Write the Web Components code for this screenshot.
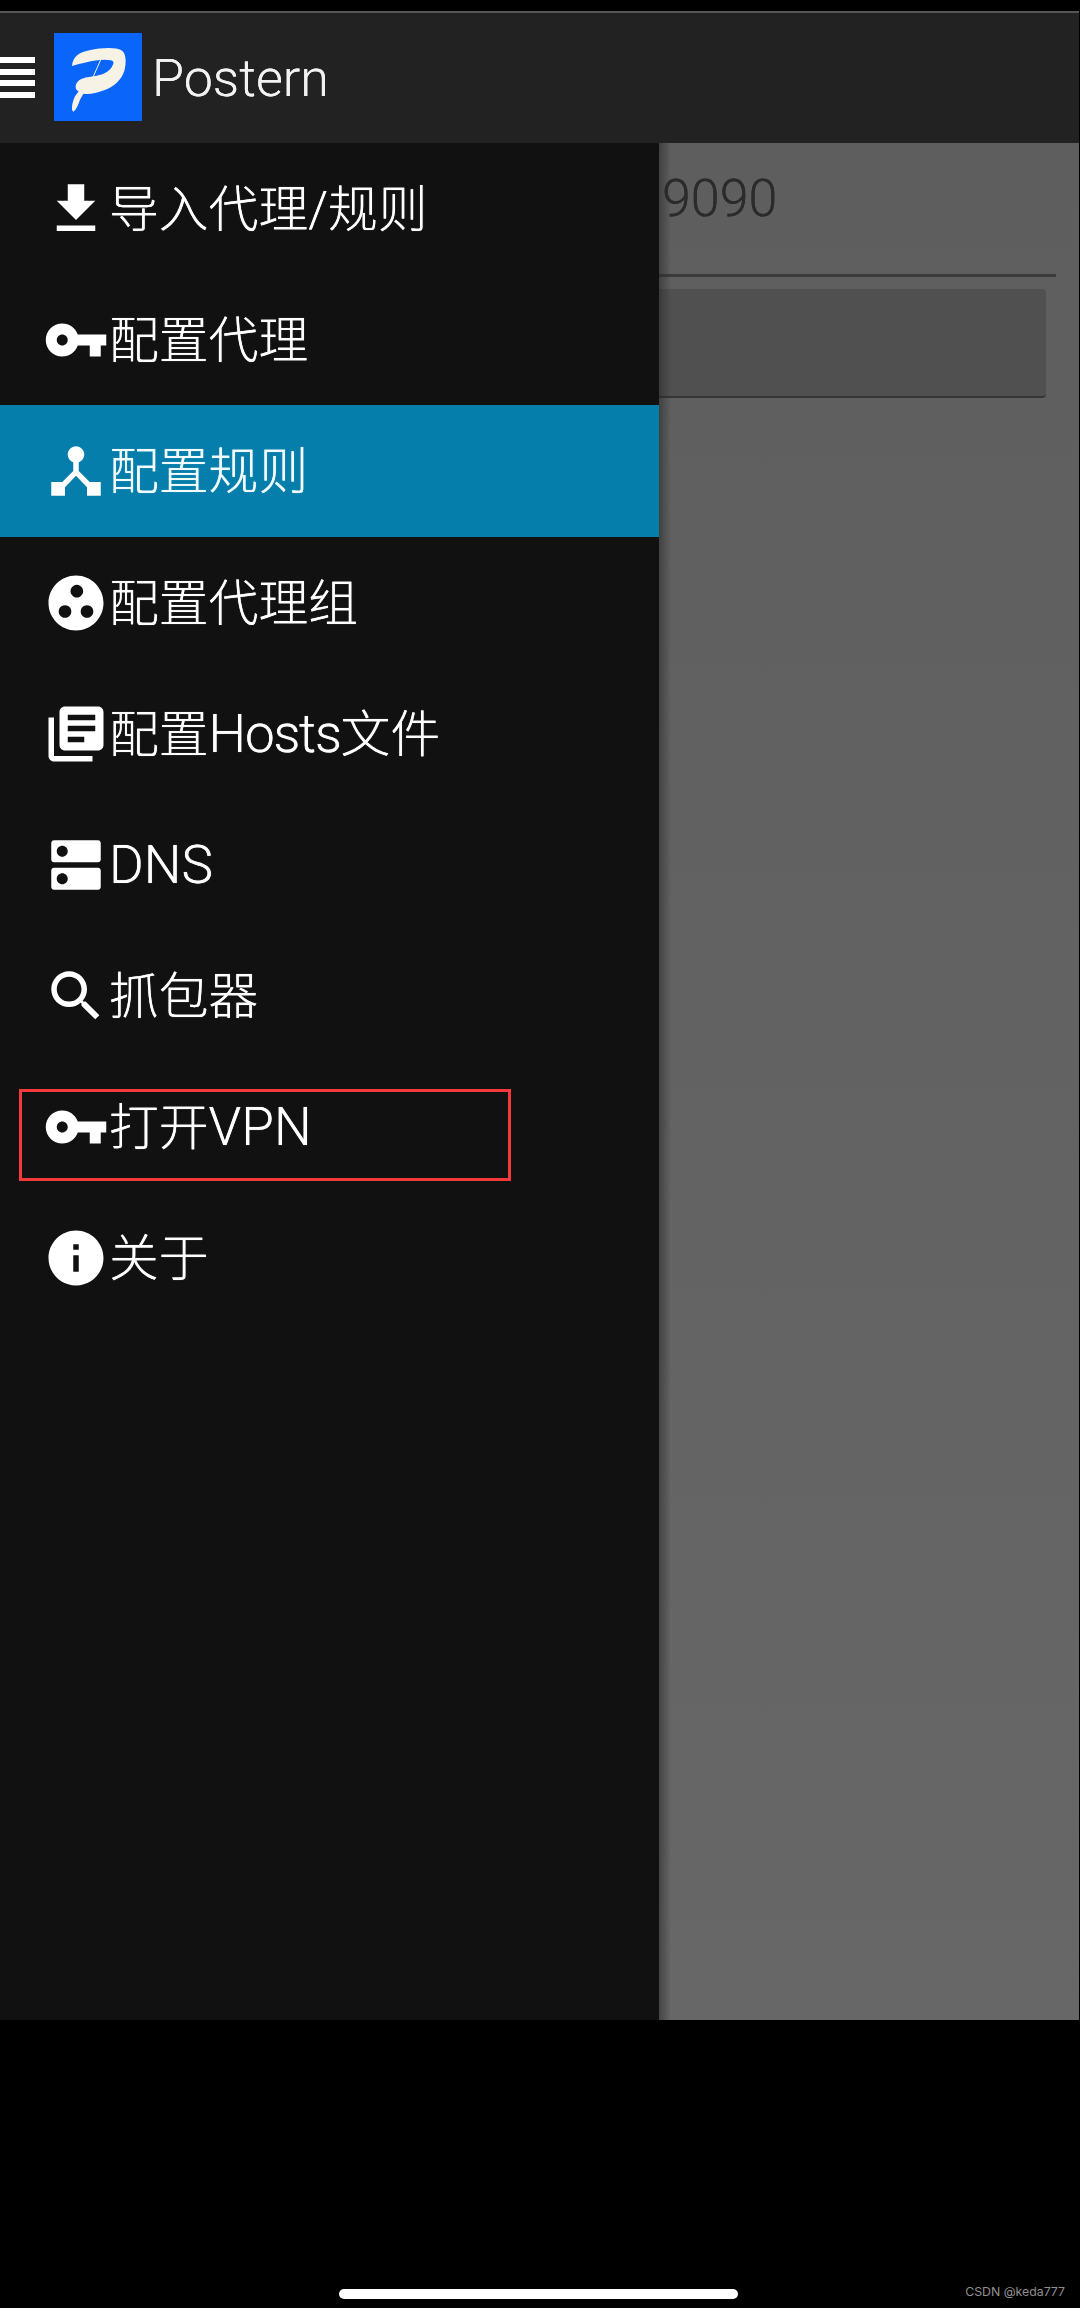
<!DOCTYPE html>
<html lang="zh-CN">
<head>
<meta charset="utf-8">
<title>Postern</title>
<style>
html,body{margin:0;padding:0;background:#000;}
body{width:1080px;height:2308px;overflow:hidden;font-family:Roboto,"Noto Sans CJK SC",sans-serif;}
</style>
</head>
<body>
<postern-app>
  <postern-toolbar slot="toolbar">Postern</postern-toolbar>
  <postern-drawer slot="drawer">
    <postern-row icon="download">导入代理/规则</postern-row>
    <postern-row icon="key">配置代理</postern-row>
    <postern-row icon="hub" active>配置规则</postern-row>
    <postern-row icon="group">配置代理组</postern-row>
    <postern-row icon="library">配置<b class="tight">Hosts</b>文件</postern-row>
    <postern-row icon="dns"><b>DNS</b></postern-row>
    <postern-row icon="search">抓包器</postern-row>
    <postern-row icon="key" marked>打开<b>VPN</b></postern-row>
    <postern-row icon="info">关于</postern-row>
  </postern-drawer>
  <postern-content slot="content">9090</postern-content>
  <postern-navbar slot="navbar">CSDN @keda777</postern-navbar>
</postern-app>
<script>
const ICONS={
 download:'M19 9h-4V3H9v6H5l7 7 7-7zM5 18v2h14v-2H5z',
 key:'M12.65 10C11.83 7.67 9.61 6 7 6c-3.31 0-6 2.69-6 6s2.69 6 6 6c2.61 0 4.83-1.67 5.65-4H17v4h4v-4h2v-4H12.65zM7 14c-1.1 0-2-.9-2-2s.9-2 2-2 2 .9 2 2-.9 2-2 2z',
 hub:'M17 16l-4-4V8.82C14.16 8.4 15 7.3 15 6c0-1.66-1.34-3-3-3S9 4.34 9 6c0 1.3.84 2.4 2 2.82V12l-4 4H3v5h5v-3.05l4-4.2 4 4.2V21h5v-5h-4z',
 group:'M12 2C6.48 2 2 6.48 2 12s4.48 10 10 10 10-4.48 10-10S17.52 2 12 2zM12.3 5.4a2.3 2.3 0 1 0 .001 0zM8 12.8a2.3 2.3 0 1 0 .001 0zM16 12.8a2.3 2.3 0 1 0 .001 0z',
 library:'M4 6H2v14c0 1.1.9 2 2 2h14v-2H4V6zm16-4H8c-1.1 0-2 .9-2 2v12c0 1.1.9 2 2 2h12c1.1 0 2-.9 2-2V4c0-1.1-.9-2-2-2zm-1 9H9V9h10v2zm-4 4H9v-2h6v2zm4-8H9V5h10v2z',
 dns:'M20 13H4c-.55 0-1 .45-1 1v6c0 .55.45 1 1 1h16c.55 0 1-.45 1-1v-6c0-.55-.45-1-1-1zM7 19c-1.1 0-2-.9-2-2s.9-2 2-2 2 .9 2 2-.9 2-2 2zM20 3H4c-.55 0-1 .45-1 1v6c0 .55.45 1 1 1h16c.55 0 1-.45 1-1V4c0-.55-.45-1-1-1zM7 9c-1.1 0-2-.9-2-2s.9-2 2-2 2 .9 2 2-.9 2-2 2z',
 search:'M15.5 14h-.79l-.28-.27C15.41 12.59 16 11.11 16 9.5 16 5.91 13.09 3 9.5 3S3 5.91 3 9.5 5.91 16 9.5 16c1.61 0 3.09-.59 4.23-1.57l.27.28v.79l5 4.99L20.49 19l-4.99-5zm-6 0C7.01 14 5 11.99 5 9.5S7.01 5 9.5 5 14 7.01 14 9.5 11.99 14 9.5 14z',
 info:'M12 2C6.48 2 2 6.48 2 12s4.48 10 10 10 10-4.48 10-10S17.52 2 12 2zm1 15h-2v-6h2v6zm0-8h-2V7h2v2z'
};
class Base extends HTMLElement{
  constructor(){super();this.attachShadow({mode:'open'}).innerHTML=this.markup();}
}
customElements.define('postern-app',class extends Base{markup(){return `
<style>
:host{display:grid;grid-template-columns:659px 420px 1px;grid-template-rows:11px 132px 1877px 288px;width:1080px;height:2308px;background:#000;}
.tb{grid-column:1 / 3;grid-row:2;display:block}
.dr{grid-column:1;grid-row:3;display:block}
.ct{grid-column:2;grid-row:3;display:block}
.nv{grid-column:1 / 4;grid-row:4;display:block}
</style>
<div class="tb"><slot name="toolbar"></slot></div>
<div class="dr"><slot name="drawer"></slot></div>
<div class="ct"><slot name="content"></slot></div>
<div class="nv"><slot name="navbar"></slot></div>`}});
customElements.define('postern-toolbar',class extends Base{markup(){return `
<style>
:host{display:flex;align-items:flex-start;box-sizing:border-box;height:132px;border-top:2px solid #565656;background:#222;color:#f2f2f2;}
.menu{display:flex;flex-direction:column;gap:5.5px;width:35px;margin-top:44px;flex:none}
.menu i{display:block;height:6px;background:#fff}
svg{display:block;width:88px;height:88px;margin:20px 0 0 19px;flex:none}
.title{margin:37px 0 0 10px;font:300 52px/58px Roboto,sans-serif;text-shadow:0 0 .6px #f2f2f2}
</style>
<div class="menu"><i></i><i></i><i></i><i></i></div>
<svg viewBox="72 38 264 264" aria-hidden="true"><rect x="72" y="38" width="264" height="264" fill="#0a66fb"/>
<path fill="#f6f3e6" d="M126 137C128 110 146 96 178 90C215 82 258 80 274 90C290 100 289 130 283 152C274 180 250 200 222 210C200 218 175 224 160 220L150 238C145 252 138 270 130 274C122 270 127 245 135 228L146 213C135 208 134 194 143 184C152 174 170 170 182 169C205 166 232 160 244 142C254 128 252 122 242 120C224 116 192 120 170 126C152 131 140 132 126 137Z"/>
<path fill="none" stroke="#f6f3e6" stroke-width="3" d="M214 114L184 182M188 174L212 170"/></svg>
<div class="title"><slot></slot></div>`}});
customElements.define('postern-drawer',class extends Base{markup(){return `
<style>
:host{display:flex;flex-direction:column;height:1877px;background:#111;}
</style><slot></slot>`}});
customElements.define('postern-row',class extends Base{
 markup(){const d=ICONS[this.getAttribute('icon')];return `
<style>
:host{display:flex;align-items:center;position:relative;box-sizing:border-box;height:131px;padding-left:43px;color:#fff;font:300 49.8px/60px Roboto,"Noto Sans CJK SC",sans-serif;text-shadow:0 0 .7px #fff}
:host([active]){background:#057eab;height:132px;color:#f2fbff}
svg{display:block;width:66px;height:66px;flex:none;fill:#fff}
span{margin-top:2px}
::slotted(b){font-weight:300;font-size:53px}
::slotted(b.tight){letter-spacing:-1.2px}
.mark{display:none;position:absolute;left:19px;top:28px;width:492px;height:92px;box-sizing:border-box;border:3px solid #f23a3a;pointer-events:none}
:host([marked]) .mark{display:block}
</style>
<svg viewBox="0 0 24 24" aria-hidden="true"><path fill-rule="evenodd" d="${d}"/></svg><span><slot></slot></span><div class="mark"></div>`}});
customElements.define('postern-content',class extends Base{markup(){return `
<style>
:host{display:block;position:relative;height:1877px;background:linear-gradient(#5e5e5e,#676767);color:#2b2b2b;overflow:hidden}
.shadow{position:absolute;left:0;top:0;bottom:0;width:12px;background:linear-gradient(90deg,rgba(40,40,40,.55),rgba(40,40,40,0))}
.value{padding:26px 0 0 3px;font:300 52px/60px Roboto,sans-serif;text-shadow:0 0 .6px #2b2b2b;height:45px}
.rule{height:3px;width:397px;margin-top:60px;background:#3b3b3b}
.btn{width:387px;height:107px;margin-top:12px;background:#505050;border-bottom:2px solid #353535;border-radius:0 4px 4px 0;}
</style>
<div class="value"><slot></slot></div><div class="rule"></div><div class="btn"></div><div class="shadow"></div>`}});
customElements.define('postern-navbar',class extends Base{markup(){return `
<style>
:host{display:grid;grid-template-columns:339px 399px 1fr;align-items:end;box-sizing:border-box;height:288px;padding-bottom:9px;background:#000;}
.home{grid-column:2;height:10px;border-radius:5px;background:#fff}
.mark{justify-self:end;margin-right:15px;font:400 12.3px/15px Inter,sans-serif;color:#8f8f8f;}
</style>
<div class="home"></div><div class="mark"><slot></slot></div>`}});
</script>
</body>
</html>
